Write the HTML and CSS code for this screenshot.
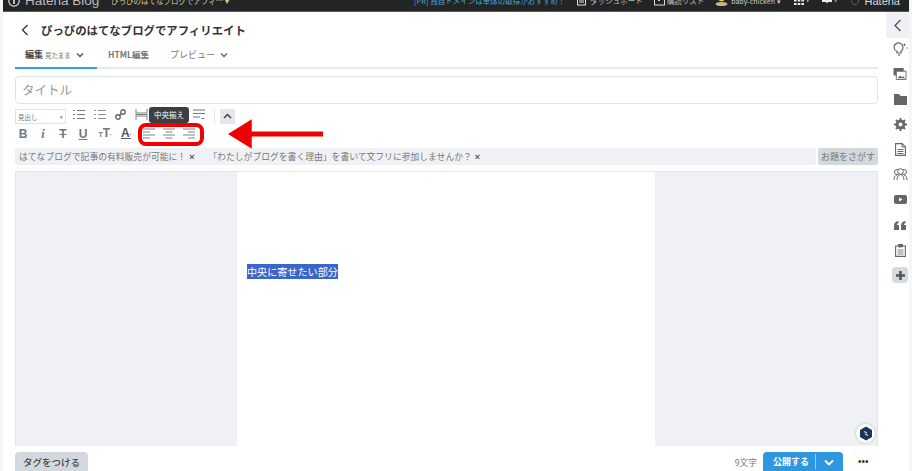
FILE: index.html
```html
<!DOCTYPE html>
<html lang="ja">
<head>
<meta charset="utf-8">
<title>はてなブログ</title>
<link rel="stylesheet" href="styles.css">
</head>
<body>
<header class="topbar">
  <div class="top-left">
    <svg class="hlogo" width="12" height="12" viewBox="0 0 12 12"><circle cx="6" cy="6" r="5.2" fill="none" stroke="#ddd" stroke-width="1.2"/><rect x="5.2" y="3" width="1.6" height="6" fill="#ddd"/></svg>
    <span class="brand">Hatena Blog</span>
    <span class="blogname">ぴっぴのはてなブログでアフィ… ▾</span>
  </div>
  <div class="top-right">
    <span class="pr">[PR] 独自ドメインは単体の取得がおすすめ！</span>
    <span class="tlink"><svg width="9" height="12" viewBox="0 0 9 12"><rect x=".5" y="1" width="8" height="10" fill="none" stroke="#ddd"/><path d="M2 4h5M2 6h5M2 8h5" stroke="#ddd"/></svg>ダッシュボード</span>
    <span class="tlink list"><svg width="11" height="12" viewBox="0 0 11 12"><rect x=".5" y="1" width="10" height="10" fill="none" stroke="#ddd"/><path d="M3 5l2 2 3-3" stroke="#ddd" fill="none"/></svg>購読リスト</span>
    <span class="tlink user"><svg width="13" height="12" viewBox="0 0 13 12"><circle cx="6.500" cy="4" r="3.400" fill="#e8c85a"/><ellipse cx="6.500" cy="10" rx="6" ry="2" fill="#c9b98a"/></svg>baby-chicken ▾</span>
    <svg class="grid" width="15" height="12" viewBox="0 0 15 12"><path d="M0 1h2.600v2.600H0zM3.700 1h2.600v2.600H3.700zM7.400 1H10v2.600H7.400zM0 5h2.600v2.600H0zM3.700 5h2.600v2.600H3.700zM7.400 5H10v2.600H7.400zM0 9h2.600v2H0zM3.700 9h2.600v2H3.700zM7.400 9H10v2H7.400zM12.500 6.500h2.500l-1.250 1.500z" fill="#eee"/></svg>
    <svg class="bell" width="15" height="12" viewBox="0 0 15 12"><path d="M0 3h10v5H6L5 9.500 4 8H0zM12.500 6.500h2.500l-1.250 1.500z" fill="#eee"/></svg>
    <svg class="hmark" width="8" height="12" viewBox="0 0 8 12"><circle cx="4" cy="7" r="3.500" fill="none" stroke="#999" stroke-dasharray="1 1"/></svg>
    <span class="hatena">Hatena</span>
  </div>
</header>

<div class="app">
  <main class="editor">
    <div class="titlebar">
      <svg class="back" width="8" height="12" viewBox="0 0 8 12"><path d="M6.500 1L1.500 6l5 5" fill="none" stroke="#333" stroke-width="1.300"/></svg>
      <h1 class="blogtitle">ぴっぴのはてなブログでアフィリエイト</h1>
    </div>

    <nav class="tabs">
      <span class="tab active"><b>編集</b> <small>見たまま</small><svg class="chev" width="8" height="6" viewBox="0 0 8 6"><path d="M1 1.500l3 3 3-3" fill="none" stroke="#555" stroke-width="1.400"/></svg></span>
      <span class="tab html">HTML編集</span>
      <span class="tab prev">プレビュー<svg class="chev" width="8" height="6" viewBox="0 0 8 6"><path d="M1 1.500l3 3 3-3" fill="none" stroke="#666" stroke-width="1.400"/></svg></span>
    </nav>

    <div class="title-input">タイトル</div>

    <div class="toolbar">
      <div class="tool-row r1">
        <span class="select">見出し<i>▾</i></span>
        <svg class="t" width="12" height="11" viewBox="0 0 12 11"><path d="M0 1.500h2M0 5.500h2M0 9.500h2M4 1.500h8M4 5.500h8M4 9.500h8" stroke="#6f7780" stroke-width="1.100"/></svg>
        <svg class="t" width="12" height="11" viewBox="0 0 12 11"><path d="M0 1.500h2M0 5.500h2M0 9.500h2M4 1.500h8M4 5.500h8M4 9.500h8" stroke="#8b929a" stroke-width="1"/></svg>
        <svg class="t" width="11" height="11" viewBox="0 0 11 11"><path d="M4.500 6.500L6.500 4.500" stroke="#666" stroke-width="1.300"/><circle cx="3" cy="8" r="2.200" fill="none" stroke="#666" stroke-width="1.400"/><circle cx="8" cy="3" r="2.200" fill="none" stroke="#666" stroke-width="1.400"/></svg>
        <svg class="t" width="13" height="11" viewBox="0 0 13 11"><path d="M1 0v4h11V0M1 11V7h11v4M0 5.500h13" fill="none" stroke="#7b838b" stroke-width="1"/></svg>
        <svg class="t hidden-tool" width="12" height="11" viewBox="0 0 12 11"></svg>
        <svg class="t last" width="12" height="11" viewBox="0 0 12 11"><path d="M0 1h12M0 4.500h12M0 8h7" stroke="#6f7780" stroke-width="1.200"/><path d="M8.500 9.500h3" stroke="#6f7780"/></svg>
        <span class="sep"></span>
        <span class="collapse"><svg width="9" height="6" viewBox="0 0 9 6"><path d="M1 5l3.500-3.500L8 5" fill="none" stroke="#444" stroke-width="1.500"/></svg></span>
      </div>
      <div class="tool-row r2">
        <span class="fmt b">B</span>
        <span class="fmt i">i</span>
        <span class="fmt s">T</span>
        <span class="fmt u">U</span>
        <span class="fmt size"><small>T</small>T<em>▪</em></span>
        <span class="fmt color">A<em>▪</em></span>
        <svg class="al first" width="12" height="12" viewBox="0 0 12 12"><path d="M0 1h12M0 4h7M0 7h12M0 10h7" stroke="#7b838b" stroke-width="1.200"/></svg>
        <svg class="al" width="12" height="12" viewBox="0 0 12 12"><path d="M0 1h12M2.500 4h7M0 7h12M2.500 10h7" stroke="#7b838b" stroke-width="1.200"/></svg>
        <svg class="al" width="12" height="12" viewBox="0 0 12 12"><path d="M0 1h12M5 4h7M0 7h12M5 10h7" stroke="#7b838b" stroke-width="1.200"/></svg>
      </div>
      <span class="tooltip">中央揃え</span>
      <span class="highlight"></span>
      <svg class="arrow" width="96" height="30" viewBox="0 0 97 30"><path d="M0 15L24 0v12.500h72v5H24V30z" fill="#f00000"/></svg>
    </div>

    <div class="topics">
      <div class="topic-list">
        <span>はてなブログで記事の有料販売が可能に！<b>×</b></span>
        <span>「わたしがブログを書く理由」を書いて文フリに参加しませんか？<b>×</b></span>
      </div>
      <span class="topic-btn">お題をさがす</span>
    </div>

    <div class="canvas">
      <div class="page"><span class="sel">中央に寄せたい部分</span></div>
      <span class="fab"><svg width="14" height="15" viewBox="0 0 14 15"><path d="M7 .500l6 3.500v7l-6 3.500L1 11V4z" fill="#1d3557"/><path d="M5 5.500l3 1.500M9 9.500L6 8" stroke="#cfd8e3" stroke-width="1.100"/></svg></span>
    </div>

    <footer class="actions">
      <span class="tagbtn">タグをつける</span>
      <div class="publish">
        <span class="count">9文字</span>
        <span class="pubbtn"><span>公開する</span><svg width="10" height="7" viewBox="0 0 10 7"><path d="M1 1.500l4 4 4-4" fill="none" stroke="#fff" stroke-width="1.800"/></svg></span>
        <span class="more">•••</span>
      </div>
    </footer>
  </main>

  <aside class="side">
    <span class="toggle"><svg width="9" height="13" viewBox="0 0 9 13"><path d="M7.500 1L2 6.500 7.500 12" fill="none" stroke="#555" stroke-width="1.400"/></svg></span>
    <svg class="si" width="16" height="15" viewBox="0 0 16 15"><path d="M2 5.500a4.500 4.500 0 1 1 7 3.700V11H5V9.200a4.500 4.500 0 0 1-3-3.700z" fill="none" stroke="#666" stroke-width="1.200"/><path d="M5.500 12.500h3.200L7 14.500z" fill="#777"/><path d="M12.500 1.500v2.500M11.300 2.700h2.400M14.500 6h1.500" stroke="#777"/></svg>
    <svg class="si" width="14" height="12" viewBox="0 0 14 13"><path d="M0 0h11v8H0z" fill="#666"/><path d="M3 3.500h10.500v9H3z" fill="#fff" stroke="#666"/><path d="M4.500 11l2.500-3 2 2 1.500-1 2 2z" fill="#666"/></svg>
    <svg class="si" width="13" height="11" viewBox="0 0 13 11"><path d="M0 0h5l1.500 2H13v9H0z" fill="#666"/></svg>
    <svg class="si" width="13" height="13" viewBox="0 0 13 13"><circle cx="6.500" cy="6.500" r="3.500" fill="none" stroke="#666" stroke-width="2.600"/><path d="M6.500 0v13M0 6.500h13M2 2l9 9M11 2l-9 9" stroke="#666" stroke-width="2"/><circle cx="6.500" cy="6.500" r="2" fill="#fff"/></svg>
    <svg class="si" width="11" height="13" viewBox="0 0 11 13"><path d="M.6.600h6.500l3.300 3.300v8.500H.6z" fill="none" stroke="#666" stroke-width="1.100"/><path d="M7 .600V4h3.400M2.500 6.500h6M2.500 8.500h6M2.500 10.500h6" fill="none" stroke="#666"/></svg>
    <svg class="si" width="15" height="13" viewBox="0 0 15 13"><circle cx="4" cy="4" r="2.500" fill="none" stroke="#666"/><circle cx="11" cy="4" r="2.500" fill="none" stroke="#666"/><circle cx="7.500" cy="3.500" r="2.800" fill="#fff" stroke="#666"/><path d="M1 12c0-3 1.500-5 3-5M14 12c0-3-1.500-5-3-5M4 12c0-3 1.500-5.500 3.500-5.500S11 9 11 12" fill="none" stroke="#666"/></svg>
    <svg class="si" width="13" height="9" viewBox="0 0 13 9"><rect width="13" height="9" rx="2" fill="#666"/><path d="M5 2.500l3.500 2-3.500 2z" fill="#fff"/></svg>
    <svg class="si" width="12" height="9" viewBox="0 0 12 9"><path d="M0 9V5c0-3 1.500-4.500 4.500-5v2C3.500 2.300 3 3 3 4h2v5zM7 9V5c0-3 1.500-4.500 4.500-5v2c-1 .300-1.500 1-1.500 2h2v5z" fill="#666"/></svg>
    <svg class="si" width="11" height="13" viewBox="0 0 11 13"><path d="M.6 2h9.800v10.400H.6z" fill="none" stroke="#666" stroke-width="1.100"/><path d="M3.500 0h4v3h-4zM2.500 6h6M2.500 8h6M2.500 10h6" fill="#666" stroke="#666" stroke-width=".8"/></svg>
    <span class="plus"><svg width="9" height="9" viewBox="0 0 9 9"><path d="M4.500 0v9M0 4.500h9" stroke="#555" stroke-width="2.600"/></svg></span>
  </aside>
</div>
</body>
</html>
```

FILE: styles.css
```css
* { box-sizing: border-box; }
html, body { margin: 0; height: 471px; overflow: hidden; }
body {
  width: 912px;
  background: #fff;
  font-family: "Noto Sans CJK JP", "Liberation Sans", sans-serif;
  color: #444;
  border-left: 3px solid #f6f6f6;
  border-right: 3px solid #f6f6f6;
}
.topbar {
  margin: 0 -3px;
  height: 12px;
  background: #222426;
  display: flex;
  justify-content: space-between;
  align-items: flex-start;
  overflow: hidden;
  color: #ccc;
  font-size: 7.500px;
  line-height: 10px;
  white-space: nowrap;
  border-bottom: 1px solid #555;
}
.top-left { display: flex; align-items: center; margin: -6px 0 0 8px; height: 14px; flex: none; }
.hlogo { margin-right: 5px; }
.brand { font-family: "Liberation Sans", sans-serif; font-size: 13.500px; line-height: 14px; color: #bbb; width: 86px; }
.blogname { color: #d9cf9c; }
.top-right { display: flex; align-items: flex-end; height: 10px; margin: -4px 12px 0 0; flex: none; }
.pr { color: #46a7d8; margin-right: 12px; }
.tlink { display: inline-flex; align-items: flex-end; margin-right: 11px; color: #bbb; }
.tlink svg { margin-right: 4px; flex: none; }
.tlink.list svg { margin-right: 2px; }
.tlink.user svg { margin-right: 3px; }
.tlink.user { color: #ccc; margin-right: 13px; font-size: 7px; }
.grid { margin-right: 13px; flex: none; }
.bell { margin-right: 14px; flex: none; }
.hmark { margin-right: 6px; flex: none; }
.hatena { font-family: "Liberation Sans", sans-serif; font-size: 11px; color: #ddd; }

.app { display: flex; height: 459px; }
.editor { width: 875px; padding-left: 12px; flex: none; }
.side {
  width: 31px;
  padding-left: 13px;
  display: grid;
  grid-template-columns: 18px;
  grid-template-rows: 26px 23.400px repeat(10, 25.200px);
  align-content: start;
  align-items: center;
  justify-items: center;
  flex: none;
}
.toggle {
  justify-self: end;
  width: 23px;
  height: 26px;
  background: #f0f1f5;
  display: flex;
  align-items: center;
  justify-content: center;
}
.si { display: block; }
.plus {
  width: 16px;
  height: 16px;
  background: #d5dae0;
  border-radius: 4px;
  display: flex;
  align-items: center;
  justify-content: center;
}

.titlebar { display: flex; align-items: center; height: 36px; padding: 0 0 0 6px; }
.back { margin-right: 12px; }
.blogtitle { margin: 0; font-size: 11.400px; font-weight: 700; color: #333; line-height: 36px; }

.tabs {
  display: flex;
  height: 21px;
  border-bottom: 2px solid #e6e9ee;
  font-size: 9px;
  line-height: 13px;
  color: #6b6b6b;
}
.tab { display: block; white-space: nowrap; height: 21px; }
.tab.active { width: 82px; padding-left: 10px; border-bottom: 2px solid #2f9fe8; color: #444; }
.tab small { font-size: 6.500px; color: #777; font-weight: 400; }
.chev { margin-left: 5px; vertical-align: 0; }
.tab.html { width: 62px; padding-left: 11px; font-weight: 700; color: #777; font-size: 8.500px; }
.tab.prev { padding-left: 11px; color: #777; }

.title-input {
  margin-top: 7px;
  width: 863px;
  height: 28px;
  border: 1px solid #dfe3e8;
  border-radius: 4px;
  padding-left: 6px;
  font-size: 12.500px;
  line-height: 26px;
  color: #9a9a9a;
}

.toolbar { position: relative; height: 44px; padding-top: 3px; }
.tool-row { display: flex; align-items: center; }
.r1 { height: 18px; }
.r2 { height: 21px; margin-top: -2px; }
.select {
  width: 51px;
  height: 15px;
  border: 1px solid #dfe3e8;
  font-size: 6.500px;
  line-height: 14px;
  color: #777;
  padding-left: 2px;
  display: flex;
  justify-content: space-between;
  padding-right: 2px;
  margin-right: 7px;
}
.select i { font-style: normal; font-size: 5px; }
.t { margin: 2px 9px 0 0; flex: none; align-self: flex-start; }
.t:nth-of-type(4) { margin-right: 8px; }
.hidden-tool { width: 27px; margin-right: 10px; }
.t.last { margin-right: 9px; }
.sep { width: 1px; height: 15px; background: #e3e6ea; margin-right: 5px; }
.collapse {
  width: 15px;
  height: 15px;
  background: #e4e7ec;
  display: flex;
  align-items: center;
  justify-content: center;
}
.fmt {
  font-family: "Liberation Sans", sans-serif;
  font-size: 12px;
  font-weight: 700;
  color: #6f7780;
  width: 20px;
  text-align: center;
  line-height: 14px;
  flex: none;
}
.fmt.b { margin-left: -2px; }
.fmt.i { font-style: italic; font-family: "Liberation Serif", serif; }
.fmt.s { text-decoration: line-through; }
.fmt.u { text-decoration: underline; }
.fmt small { font-size: 7px; }
.fmt em { font-style: normal; font-size: 4px; vertical-align: 1px; }
.fmt.size { width: 24px; }
.fmt.color { color: #555; text-decoration: underline; width: 18px; }
.al { margin: 1px 8px 0 0; flex: none; }
.al.first { margin-left: 8px; }

.tooltip {
  position: absolute;
  left: 134px;
  top: 3px;
  width: 40px;
  height: 16px;
  background: #3b3f44;
  color: #fff;
  border-radius: 3px;
  font-size: 7.500px;
  line-height: 16px;
  text-align: center;
}
.tooltip::after {
  content: "";
  position: absolute;
  left: 18px;
  top: 16px;
  border: 2px solid transparent;
  border-top-color: #3b3f44;
}
.highlight {
  position: absolute;
  left: 123px;
  top: 19px;
  width: 66px;
  height: 23px;
  border: 4px solid #f00000;
  border-radius: 8px;
}
.arrow { position: absolute; left: 213px; top: 15px; }

.topics { display: flex; height: 17px; width: 863px; }
.topic-list {
  flex: 1;
  background: #f0f1f5;
  border-radius: 2px;
  font-size: 8.800px;
  line-height: 17px;
  color: #777;
  padding-left: 4px;
  display: flex;
  gap: 14px;
  white-space: nowrap;
}
.topic-list b { color: #555; margin-left: 3px; font-size: 9px; font-family: "Liberation Sans", sans-serif; }
.topic-btn {
  margin-left: 2px;
  width: 60px;
  background: #d3d8de;
  border-radius: 2px;
  font-size: 9px;
  line-height: 17px;
  text-align: center;
  color: #777;
  white-space: nowrap;
}

.canvas {
  position: relative;
  margin-top: 6px;
  width: 863px;
  height: 275px;
  background: #f0f1f5;
  border: 1px solid #e2e4e8;
  border-bottom: 0;
  padding: 0 222px 0 221px;
}
.page { height: 100%; background: #fff; padding: 92px 0 0 10px; font-size: 10.100px; line-height: 15px; }
.sel { background: #3a66cc; color: #fff; display: inline-block; }
.fab {
  position: absolute;
  right: 2px;
  bottom: 3px;
  width: 19px;
  height: 19px;
  border-radius: 50%;
  background: #fff;
  box-shadow: 0 0 3px rgba(0,0,0,.25);
  display: flex;
  align-items: center;
  justify-content: center;
}

.actions {
  width: 854px;
  margin-top: 6px;
  display: flex;
  justify-content: space-between;
  align-items: flex-start;
  height: 19px;
  overflow: hidden;
}
.tagbtn {
  width: 73px;
  height: 24px;
  background: #d3d8de;
  border-radius: 4px;
  font-size: 9.500px;
  line-height: 20px;
  text-align: center;
  color: #444;
  font-weight: 500;
}
.publish { display: flex; align-items: flex-start; }
.count { font-size: 8.700px; color: #777; line-height: 22px; margin-right: 6px; }
.pubbtn {
  width: 80px;
  height: 24px;
  background: #2f96e0;
  border-radius: 4px;
  color: #fff;
  font-size: 9px;
  font-weight: 700;
  display: flex;
  align-items: flex-start;
  padding-left: 10px;
}
.pubbtn span { width: 43px; border-right: 1px solid #9ccdf0; height: 15px; margin-top: 2px; line-height: 15px; margin-right: 8px; }
.pubbtn svg { margin-top: 7px; }
.more { font-size: 10px; line-height: 19px; color: #333; margin-left: 15px; width: 11px; font-family: "Liberation Sans", sans-serif; white-space: nowrap; }
```
